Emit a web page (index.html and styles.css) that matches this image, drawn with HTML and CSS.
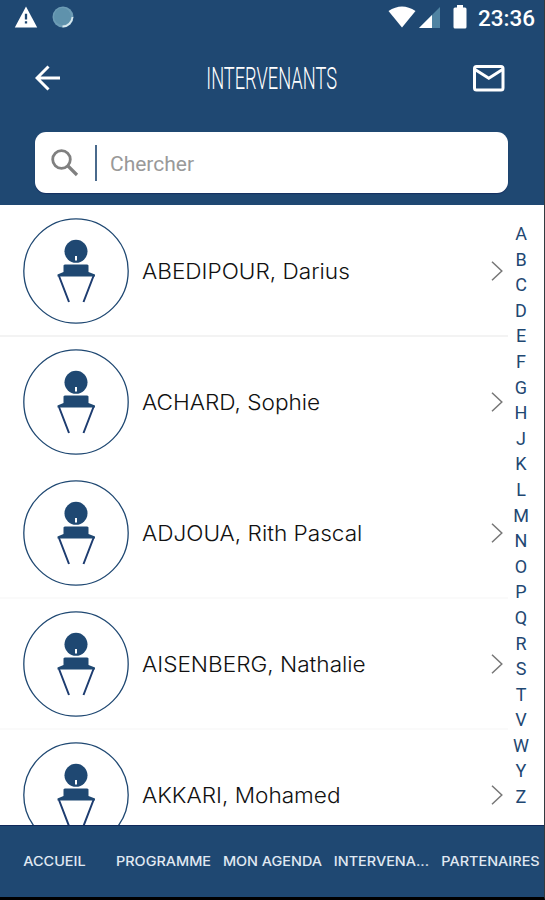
FILE: index.html
```
<!DOCTYPE html>
<html lang="fr">
<head>
    <meta charset="UTF-8">
    <title>Intervenants</title>
    <link rel="stylesheet" href="styles.css">
</head>
<body>
<svg class="defs">
    <symbol id="speaker" viewBox="0 0 106 106">
        <circle cx="53" cy="53" r="52.2" fill="#fff" stroke="#1f4872" stroke-width="1.3"/>
        <circle cx="53" cy="33.3" r="11.5" fill="#1f4872"/>
        <path d="M52 38h2v4.500h-2z" fill="#fff"/>
        <path d="M42 46.500h22q2 0 1.500 2v5.500l6.500 2.500v2H34.500v-2l6-2.500v-5.500q-.5-2 1.500-2z" fill="#1f4872"/>
        <path d="M36 58l10 26M70.500 58L60.500 84" fill="none" stroke="#1d3c70" stroke-width="2"/>
    </symbol>
    <symbol id="chevron" viewBox="0 0 12 20">
        <path d="M1 .8l9.800 9.200L1 19.200" fill="none" stroke="#777" stroke-width="1.500"/>
    </symbol>
</svg>
<div class="phone">
    <header>
        <div class="status">
            <svg class="warn" width="24" height="22" viewBox="0 0 24 23"><path d="M12 .5L23.700 22.500H.3z" fill="#fff"/><path d="M10.800 8h2.400v6h-2.400zM10.800 16h2.400v2.400h-2.400z" fill="#1f4872"/></svg>
            <svg class="sync" width="22" height="22" viewBox="0 0 22 22"><circle cx="11" cy="11" r="10.500" fill="#6d9cb5"/><circle cx="10.500" cy="10.500" r="8.500" fill="#5f92ac"/><path d="M20.500 11a10 10 0 0 1-10 9.500" fill="none" stroke="#d9e9ef" stroke-width="1.800"/></svg>
            <svg class="wifi" width="28" height="22" viewBox="0 0 28 22"><path d="M.5 5Q14-4 27.500 5L14 21.500z" fill="#fff"/></svg>
            <svg class="signal" width="21" height="21" viewBox="0 0 21 21"><path d="M21 0v21H0z" fill="#4f83a2"/><path d="M13 8v13H0z" fill="#fff"/></svg>
            <svg class="battery" width="14" height="24" viewBox="0 0 14 24"><path d="M4 0h6v2.500h2q1.500 0 1.500 1.500v18q0 1.500-1.500 1.500H2Q.5 23.500.5 22V4Q.5 2.500 2 2.500h2z" fill="#fff"/></svg>
            <span class="time">23:36</span>
        </div>
        <div class="bar">
            <svg class="back" width="26" height="26" viewBox="0 0 26 26"><path d="M25 13H2M13.500 1.500L2 13l11.500 11.500" fill="none" stroke="#fff" stroke-width="3"/></svg>
            <h1><span>INTERVENANTS</span></h1>
            <svg class="mail" width="32" height="27" viewBox="0 0 32 27"><rect x="1.500" y="1.500" width="28.500" height="23.500" rx="2" fill="none" stroke="#fff" stroke-width="3"/><path d="M2 4.500l13.800 8.700L29.500 4.500" fill="none" stroke="#fff" stroke-width="3"/></svg>
        </div>
        <div class="search">
            <svg width="28" height="28" viewBox="0 0 28 28"><circle cx="10.500" cy="10.500" r="8.800" fill="none" stroke="#808080" stroke-width="2.800"/><path d="M16.500 16.500l9.500 9.500" stroke="#808080" stroke-width="3.200"/></svg>
            <span class="placeholder">Chercher</span>
        </div>
    </header>
    <main>
        <ul class="list">
            <li class="first"><svg class="avatar"><use href="#speaker"/></svg><span>ABEDIPOUR, Darius</span><svg class="chevron"><use href="#chevron"/></svg></li>
            <li class="plain"><svg class="avatar"><use href="#speaker"/></svg><span>ACHARD, Sophie</span><svg class="chevron"><use href="#chevron"/></svg></li>
            <li><svg class="avatar"><use href="#speaker"/></svg><span>ADJOUA, Rith Pascal</span><svg class="chevron"><use href="#chevron"/></svg></li>
            <li><svg class="avatar"><use href="#speaker"/></svg><span>AISENBERG, Nathalie</span><svg class="chevron"><use href="#chevron"/></svg></li>
            <li><svg class="avatar"><use href="#speaker"/></svg><span>AKKARI, Mohamed</span><svg class="chevron"><use href="#chevron"/></svg></li>
        </ul>
        <div class="letters">
            <b>A</b><b>B</b><b>C</b><b>D</b><b>E</b><b>F</b><b>G</b><b>H</b><b>J</b><b>K</b><b>L</b><b>M</b><b>N</b><b>O</b><b>P</b><b>Q</b><b>R</b><b>S</b><b>T</b><b>V</b><b>W</b><b>Y</b><b>Z</b>
        </div>
    </main>
    <nav>
        <a>ACCUEIL</a>
        <a>PROGRAMME</a>
        <a>MON AGENDA</a>
        <a>INTERVENA...</a>
        <a>PARTENAIRES</a>
    </nav>
</div>
</body>
</html>
```
FILE: styles.css
```
* {box-sizing: border-box;}
body {margin: 0; background: #000; font-family: Inter, "Open Sans", sans-serif;}
svg {display: block; flex: none;}
.defs {width: 0; height: 0; position: absolute;}
.phone {
    width: 545px; height: 900px;
    border-right: 1px solid #333a40;
    border-bottom: 3px solid #000;
    display: flex; flex-direction: column;
    overflow: hidden;
}
header {height: 205px; background: #1f4872; flex: none;}

.status {display: flex; height: 36px; padding: 6px 12px 0 14px;}
.sync {margin-left: 14px;}
.wifi {margin-left: 314px;}
.signal {margin: 1px 0 0 3px;}
.battery {margin: -1px 0 0 13px;}
.time {
    margin: -1px 0 0 11px;
    font: 500 22.500px/26px Roboto, sans-serif;
    color: #fff;
}

.bar {display: flex; align-items: center; height: 84px; padding: 0 39px 0 35px;}
.bar h1 {
    flex: 1; margin: 0; padding-left: 10px; text-align: center;
    font: 300 32px/40px Roboto, sans-serif;
    color: #fff;
}
.bar h1 span {display: inline-block; margin: 0 -60px; transform: scaleX(.57);}

.search {
    display: flex; align-items: center;
    width: 473px; height: 61px;
    margin: 12px 0 0 35px; padding-left: 16px;
    background: #fff; border-radius: 11px;
    box-shadow: 0 1px 1px #152f60;
}
.placeholder {
    margin-left: 16px; padding: 2px 0 0 13px;
    border-left: 2px solid #4a6a8c;
    font: 400 21px/34px Roboto, sans-serif;
    color: #999;
}

main {display: flex; height: 620px; padding-top: 1px; background: #fff; overflow: hidden; flex: none;}
.list {list-style: none; margin: 0; padding: 0; width: 508px;}
.list li {
    display: flex; align-items: center;
    height: 131px; padding: 0 5px 0 23px;
    border-bottom: 2px solid #fafafa;
}
.list .first {border-color: #f3f3f3;}
.list .plain {border-color: #fff;}
.avatar {width: 106px; height: 106px;}
.list span {
    flex: 1; margin: 2px 0 0 13px;
    font-size: 21px; font-weight: 300; color: #111;
    white-space: nowrap;
    transform: scaleX(1.076); transform-origin: left;
}
.chevron {width: 12px; height: 20px;}
.letters {width: 26px; padding-top: 15px; text-align: center;}
.letters b {
    display: block; height: 25.600px;
    font: 400 18px/26px Roboto, sans-serif;
    color: #1f4872;
}

nav {
    flex: 1; display: grid; grid-template-columns: repeat(5, 109px);
    align-items: center;
    padding-bottom: 2px;
    background: #1f4872;
    border-top: 1px solid #10295a;
}
nav a {
    text-align: center; white-space: nowrap;
    font-size: 13px; font-weight: 500; color: #e0e9f2;
    transform: scaleX(1.11);
}
```
